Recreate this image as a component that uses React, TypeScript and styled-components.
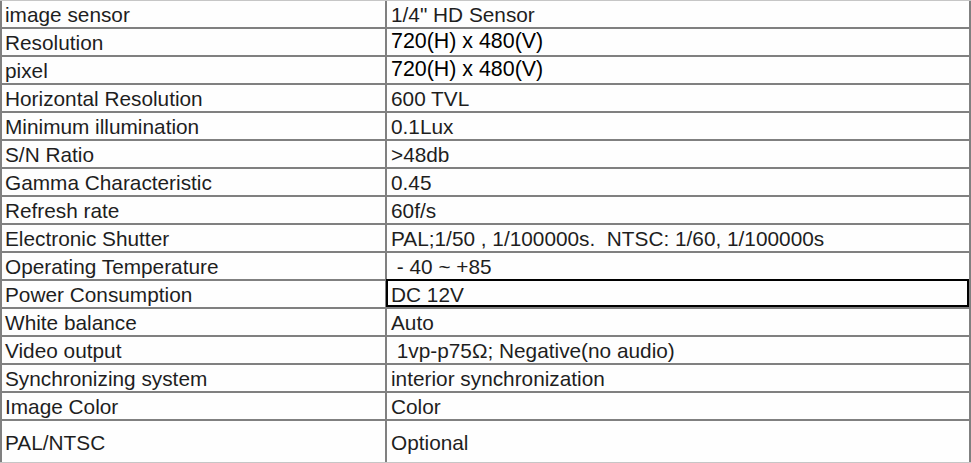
import React from 'react';
import styled, { createGlobalStyle } from 'styled-components';

const GlobalStyle = createGlobalStyle`
	html, body {
		margin: 0;
		padding: 0;
		background: #fefefe;
	}
	body {
		font-family: "Liberation Sans", Arial, sans-serif;
	}
`;

const SpecSheet = styled.div`
	width: 971px;
	border-top: 1px solid #c6c6c6;
	border-bottom: 1px solid #c6c6c6;
	box-sizing: border-box;
	background: #fefefe;
`;

const Row = styled.div<{ $tall?: boolean }>`
	display: grid;
	grid-template-columns: 387px 584px;
	height: ${({ $tall }) => ($tall ? '41px' : '28px')};
`;

const Cell = styled.div<{ $first?: boolean; $last?: boolean; $big?: boolean; $boxed?: boolean }>`
	position: relative;
	box-sizing: border-box;
	display: flex;
	align-items: center;
	padding: ${({ $big }) => ($big ? '0 0 2px' : '2px 0 0')};
	padding-left: ${({ $first }) => ($first ? '3px' : '4px')};
	border-bottom: ${({ $last }) => ($last ? 'none' : '2px solid #808080')};
	border-left: ${({ $first }) => ($first ? '2px solid #808080' : 'none')};
	border-right: 2px solid #808080;
	font-size: ${({ $big }) => ($big ? '21.4px' : '20.8px')};
	color: ${({ $big }) => ($big ? '#000' : '#1e1e1e')};
	white-space: pre;
	overflow: hidden;

	${({ $boxed }) =>
		$boxed &&
		`
		overflow: visible;
		&::after {
			content: '';
			position: absolute;
			top: -2px;
			left: -1px;
			right: 0;
			bottom: 0;
			border: 2px solid #000;
			pointer-events: none;
		}
	`}
`;

type Spec = {
	label: string;
	value: string;
	big?: boolean;
	boxed?: boolean;
};

const specs: Spec[] = [
	{ label: 'image sensor', value: '1/4" HD Sensor' },
	{ label: 'Resolution', value: '720(H) x 480(V)', big: true },
	{ label: 'pixel', value: '720(H) x 480(V)', big: true },
	{ label: 'Horizontal Resolution', value: '600 TVL' },
	{ label: 'Minimum illumination', value: '0.1Lux' },
	{ label: 'S/N Ratio', value: '>48db' },
	{ label: 'Gamma Characteristic', value: '0.45' },
	{ label: 'Refresh rate', value: '60f/s' },
	{ label: 'Electronic Shutter', value: 'PAL;1/50 , 1/100000s.  NTSC: 1/60, 1/100000s' },
	{ label: 'Operating Temperature', value: ' - 40 ~ +85' },
	{ label: 'Power Consumption', value: 'DC 12V', boxed: true },
	{ label: 'White balance', value: 'Auto' },
	{ label: 'Video output', value: ' 1vp-p75\u03A9; Negative(no audio)' },
	{ label: 'Synchronizing system', value: 'interior synchronization' },
	{ label: 'Image Color', value: 'Color' },
	{ label: 'PAL/NTSC', value: 'Optional' },
];

const App: React.FC = () => {
	return (
		<>
			<GlobalStyle />
			<SpecSheet>
				{specs.map((spec, i) => {
					const last = i === specs.length - 1;
					return (
						<Row key={spec.label} $tall={last}>
							<Cell $first $last={last}>{spec.label}</Cell>
							<Cell $last={last} $big={spec.big} $boxed={spec.boxed}>
								{spec.value}
							</Cell>
						</Row>
					);
				})}
			</SpecSheet>
		</>
	);
};

export default App;
